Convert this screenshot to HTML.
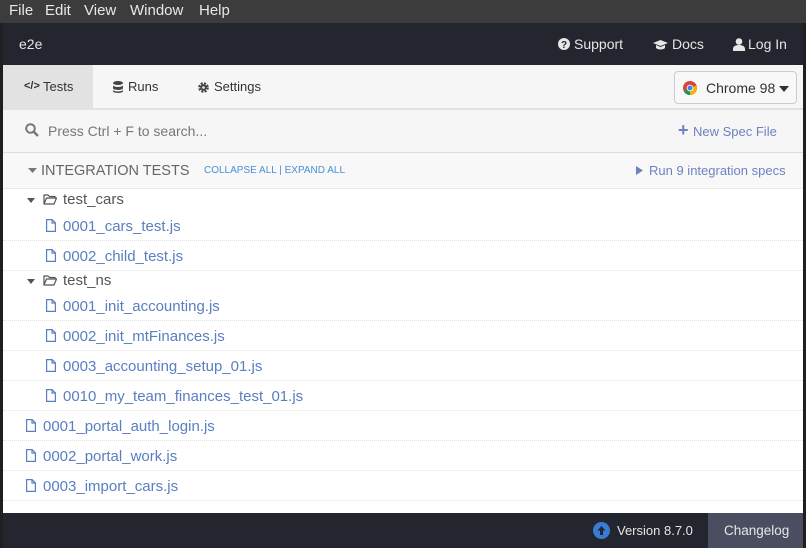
<!DOCTYPE html><html><head><style>
*{box-sizing:border-box;margin:0;padding:0}
body{width:806px;height:548px;overflow:hidden;background:#1f1f1f;font-family:"Liberation Sans",sans-serif;position:relative}
.menu{position:absolute;left:0;top:0;width:806px;height:23px;background:#3c3c3c;color:#e8e8e8;font-size:15px}
.menu span{position:absolute;top:2px}
.win{position:absolute;left:3px;top:23px;width:800px;height:525px;background:#fff}
.hdr{position:absolute;left:0;top:0;width:800px;height:42px;background:#23262f;color:#e6e6e6;font-size:14px}
.hdr span{position:absolute;top:13px}
.nav{position:absolute;left:0;top:42px;width:800px;height:45px;background:#f6f6f6;border-bottom:2px solid #e2e2e2;font-size:13px;color:#333}
.tab{position:absolute;top:0;height:43px;line-height:43px}
.srch{position:absolute;left:0;top:87px;width:800px;height:43px;background:#f6f6f6;border-bottom:1px solid #ddd;font-size:14px;color:#777}
.ih{position:absolute;left:0;top:130px;width:800px;height:36px;background:#f8f8f8;border-bottom:1px solid #e8e8e8}
.row{position:absolute;left:0;width:800px;height:30px;border-bottom:1px dotted #e2e2e2;font-size:15px;color:#5a7ec2}
.row span.t{position:absolute;top:7px}
.fold{color:#555}
.ft{position:absolute;left:0;top:490px;width:800px;height:35px;background:#23262f;color:#e6e6e6;font-size:13px}
svg{position:absolute}
</style></head><body>
<div class="menu"><span style="left:9px">File</span><span style="left:45px">Edit</span><span style="left:84px">View</span><span style="left:130px">Window</span><span style="left:199px">Help</span></div>
<div class="win">
<div class="hdr"><span style="left:16px">e2e</span>
<svg style="left:555px;top:15px" width="12" height="12" viewBox="0 0 12 12"><circle cx="6" cy="6" r="6" fill="#e6e6e6"/><text x="6" y="10" font-size="10" font-weight="bold" text-anchor="middle" fill="#23262f" font-family="Liberation Sans">?</text></svg>
<span style="left:571px">Support</span>
<svg style="left:650px;top:17px" width="15" height="10" viewBox="0 0 15 10"><path d="M0 3L7.5 0 15 3 7.5 6Z M3 5v3c2 2 7 2 9 0V5L7.5 7Z" fill="#e6e6e6"/></svg>
<span style="left:669px">Docs</span>
<svg style="left:730px;top:15px" width="12" height="13" viewBox="0 0 12 13"><circle cx="6" cy="3.5" r="3.3" fill="#e6e6e6"/><path d="M0 13v-2c0-3 3-4 6-4s6 1 6 4v2Z" fill="#e6e6e6"/></svg>
<span style="left:745px">Log In</span></div>
<div class="nav">
<div class="tab" style="left:0;width:90px;background:#e2e2e2"><span style="position:absolute;left:21px;font-size:11px;font-weight:bold">&lt;/&gt;</span><span style="position:absolute;left:40px">Tests</span></div>
<svg style="left:110px;top:16px" width="10" height="12" viewBox="0 0 10 12"><ellipse cx="5" cy="2" rx="5" ry="2" fill="#444"/><path d="M0 4c0 2.6 10 2.6 10 0v3c0 2.6-10 2.6-10 0Z M0 8.5c0 2.6 10 2.6 10 0V10c0 2.6-10 2.6-10 0Z" fill="#444"/></svg>
<div class="tab" style="left:125px">Runs</div>
<svg style="left:195px;top:17px" width="11" height="11" viewBox="0 0 11 11"><circle cx="5.5" cy="5.5" r="4" fill="none" stroke="#444" stroke-width="2.6" stroke-dasharray="2 1.2"/><circle cx="5.5" cy="5.5" r="3.2" fill="#444"/><circle cx="5.5" cy="5.5" r="1.3" fill="#f6f6f6"/></svg>
<div class="tab" style="left:211px">Settings</div>
<div style="position:absolute;left:671px;top:6px;width:123px;height:33px;border:1px solid #ccc;border-radius:4px;background:#f8f8f8">
<svg style="left:8px;top:9px" width="14" height="14" viewBox="0 0 14 14"><circle cx="7" cy="7" r="7" fill="#db4437"/><path d="M7 7L1 10.5A7 7 0 0 0 7 14Z" fill="#0f9d58"/><path d="M7 7L7 14A7 7 0 0 0 13.5 4.5Z" fill="#f4b400"/><circle cx="7" cy="7" r="3.3" fill="#fff"/><circle cx="7" cy="7" r="2.5" fill="#4285f4"/></svg>
<span style="position:absolute;left:31px;top:8px;font-size:14px;color:#333">Chrome 98</span>
<svg style="left:104px;top:14px" width="10" height="6" viewBox="0 0 10 6"><path d="M0 0h10L5 6Z" fill="#333"/></svg></div>
</div>
<div class="srch">
<svg style="left:22px;top:13px" width="14" height="14" viewBox="0 0 14 14"><circle cx="5.5" cy="5.5" r="4.3" fill="none" stroke="#777" stroke-width="2"/><path d="M8.5 8.5L13 13" stroke="#777" stroke-width="2.4"/></svg>
<span style="position:absolute;left:45px;top:13px">Press Ctrl + F to search...</span>
<span style="position:absolute;left:675px;top:10px;font-size:18px;color:#6d83c0;font-weight:bold">+</span>
<span style="position:absolute;left:690px;top:14px;font-size:13px;color:#6d83c0">New Spec File</span></div>
<div class="ih">
<svg style="left:25px;top:15px" width="9" height="5" viewBox="0 0 9 5"><path d="M0 0h9L4.5 5Z" fill="#777"/></svg>
<span style="position:absolute;left:38px;top:10px;font-size:14.5px;color:#666">INTEGRATION TESTS</span>
<span style="position:absolute;left:201px;top:12px;font-size:10px;color:#4a8fd6">COLLAPSE ALL | EXPAND ALL</span>
<svg style="left:633px;top:13px" width="7" height="9" viewBox="0 0 7 9"><path d="M0 0L7 4.5 0 9Z" fill="#6d83c0"/></svg>
<span style="position:absolute;left:646px;top:10px;font-size:13px;color:#6d83c0">Run 9 integration specs</span></div>
<div id="rows"></div>
<div class="ft">
<svg style="left:590px;top:9px" width="17" height="17" viewBox="0 0 17 17"><circle cx="8.5" cy="8.5" r="8.5" fill="#3a7bd5"/><path d="M8.5 4L4.5 8.5h2.5V13h3V8.5h2.5Z" fill="#23262f"/></svg>
<span style="position:absolute;left:614px;top:10px">Version 8.7.0</span>
<div style="position:absolute;left:705px;top:0;width:95px;height:35px;background:#4b4e61"><span style="position:absolute;left:16px;top:10px;font-size:13.5px">Changelog</span></div></div>
</div>
<script>
var R=[[1,0,"test_cars"],[0,1,"0001_cars_test.js"],[0,1,"0002_child_test.js"],[1,0,"test_ns"],[0,1,"0001_init_accounting.js"],[0,1,"0002_init_mtFinances.js"],[0,1,"0003_accounting_setup_01.js"],[0,1,"0010_my_team_finances_test_01.js"],[0,0,"0001_portal_auth_login.js"],[0,0,"0002_portal_work.js"],[0,0,"0003_import_cars.js"]];
var h="",y=166;
R.forEach(function(r){var ht=r[0]?(r[2]=="test_cars"?22:20):30;
if(r[0]){h+='<div class="row fold" style="top:'+y+'px;height:'+ht+'px;border:none"><svg style="left:24px;top:'+(ht/2-2)+'px" width="8" height="5" viewBox="0 0 8 5"><path d="M0 0h8L4 5Z" fill="#555"/></svg><svg style="left:40px;top:'+(ht/2-6)+'px" width="14" height="11" viewBox="0 0 14 11"><path d="M1 10V1h4l1.5 1.5H12V4M1 10l2.5-6H13.5L11 10Z" fill="none" stroke="#555" stroke-width="1.2" stroke-linejoin="round"/></svg><span class="t" style="left:60px;top:'+(ht/2-9)+'px">'+r[2]+'</span></div>';}
else{var x=r[1]?43:23;h+='<div class="row" style="top:'+y+'px"><svg style="left:'+x+'px;top:8px" width="10" height="13" viewBox="0 0 10 13"><path d="M.6.6h5.5l3.3 3.3v8.5H.6Z M6 .6v3.4h3.4" fill="none" stroke="#5a7ec2" stroke-width="1.2"/></svg><span class="t" style="left:'+(x+17)+'px">'+r[2]+'</span></div>';}
y+=ht;});
document.getElementById("rows").innerHTML=h;
</script>
</body></html>
